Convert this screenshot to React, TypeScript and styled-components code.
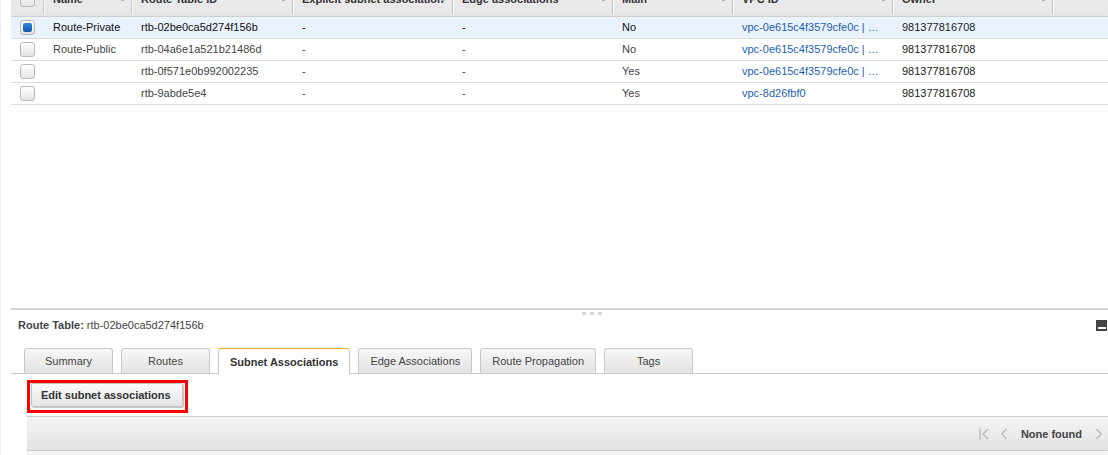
import React from 'react';
import styled, { createGlobalStyle, css } from 'styled-components';

const GlobalStyle = createGlobalStyle`
  html, body { margin: 0; padding: 0; background: #fff; }
  body { font-family: "Liberation Sans", Arial, sans-serif; font-size: 11px; color: #444; }
  * { box-sizing: border-box; }
`;

const COLS = '32px 88px 161px 160px 160px 120px 160px 160px 1fr';

const Page = styled.div`
  display: flex;
  width: 1108px;
  height: 455px;
  overflow: hidden;
  background: #fff;
`;

const Gutter = styled.div`
  width: 11px;
  flex: none;
  border-left: 1px solid #efefef;
`;

const Main = styled.div`
  flex: 1;
  min-width: 0;
  display: flex;
  flex-direction: column;
  & > * {
    flex-shrink: 0;
  }
`;

const TopPane = styled.div`
  height: 308px;
  overflow: hidden;
`;

const Table = styled.div`
  margin-top: -18px;
`;

const HeaderRow = styled.div`
  display: grid;
  grid-template-columns: ${COLS};
  height: 35px;
  background: linear-gradient(#f1f1f1, #e5e5e5);
  border-bottom: 1px solid #cfcfcf;
`;

const HeaderCell = styled.div<{ $first?: boolean }>`
  position: relative;
  display: flex;
  align-items: center;
  padding-left: ${p => (p.$first ? '9px' : '10px')};
  font-weight: bold;
  color: #333;
  white-space: nowrap;
  overflow: hidden;
  ${p =>
    !p.$first &&
    css`
      &::before {
        content: '';
        position: absolute;
        left: 0;
        top: 4px;
        bottom: 2px;
        width: 1px;
        background: #c4c4c4;
        box-shadow: 1px 0 0 #fafafa;
      }
    `}
`;

const SortMark = styled.span`
  position: absolute;
  right: 7px;
  top: 16px;
  width: 3px;
  height: 3px;
  background: #b0b0b0;
`;

const Row = styled.div<{ $selected?: boolean }>`
  display: grid;
  grid-template-columns: ${COLS};
  height: 22px;
  border-bottom: 1px solid #dcdcdc;
  background: ${p => (p.$selected ? '#eaf2fd' : '#fff')};
  color: ${p => (p.$selected ? '#111' : '#444')};
`;

const Cell = styled.div<{ $link?: boolean; $dark?: boolean; $box?: boolean }>`
  display: flex;
  align-items: center;
  padding-left: ${p => (p.$box ? '9px' : '10px')};
  padding-right: 8px;
  padding-bottom: 1px;
  white-space: nowrap;
  overflow: hidden;
  ${p => p.$link && css`color: #1d5fb3;`}
  ${p => p.$dark && css`color: #1a1a1a;`}
`;

const Check = styled.span<{ $checked?: boolean }>`
  position: relative;
  width: 15px;
  height: 15px;
  border: 1px solid #b9b9b9;
  border-radius: 3px;
  background: linear-gradient(#ffffff, #e4e4e4);
  ${p =>
    p.$checked &&
    css`
      &::after {
        content: '';
        position: absolute;
        left: 2px;
        top: 2px;
        width: 9px;
        height: 9px;
        border-radius: 2px;
        background: linear-gradient(#2f83dd, #1559b0);
      }
    `}
`;

const Splitter = styled.div`
  position: relative;
  height: 2px;
  background: #d3d3d3;
`;

const Grip = styled.div`
  position: absolute;
  left: 571px;
  top: 4px;
  display: flex;
  gap: 4px;
`;

const GripDot = styled.span`
  width: 4px;
  height: 3px;
  border: 1px solid #cfcfcf;
  background: #ececec;
`;

const TitleBar = styled.div`
  height: 30px;
  display: flex;
  align-items: center;
  justify-content: space-between;
  padding-left: 7px;
  padding-right: 1px;
  color: #444;
`;

const TitleLabel = styled.span`
  font-weight: bold;
  margin-right: 3px;
`;

const MinButton = styled.span`
  position: relative;
  width: 11px;
  height: 11px;
  background: #444;
  &::after {
    content: '';
    position: absolute;
    left: 2px;
    right: 1px;
    bottom: 2px;
    height: 2px;
    background: #fff;
  }
`;

const TabStrip = styled.div`
  display: flex;
  align-items: flex-end;
  gap: 8px;
  padding: 8px 0 0 13px;
  border-bottom: 1px solid #cbcbcb;
`;

const Tab = styled.div<{ $active?: boolean }>`
  height: 25px;
  min-width: 89px;
  padding: 0 11px;
  display: flex;
  align-items: center;
  justify-content: center;
  border: 1px solid #c8c8c8;
  border-bottom: none;
  border-radius: 3px 3px 0 0;
  background: linear-gradient(#f7f7f7, #e3e3e3);
  color: #444;
  white-space: nowrap;
  ${p =>
    p.$active &&
    css`
      height: 26px;
      margin-bottom: -1px;
      background: #fff;
      border-top: 1px solid #f5a623;
      font-weight: bold;
      color: #333;
    `}
`;

const ActionRow = styled.div`
  display: flex;
  padding: 6px 0 0 16px;
`;

const Highlight = styled.div`
  display: flex;
  border: 3px solid #ff0000;
  padding: 0 2px 3px 1px;
`;

const Button = styled.button`
  height: 24px;
  padding: 0 11px 0 9px;
  border: 1px solid #c4c4c4;
  border-radius: 2px;
  background: linear-gradient(#fbfbfb, #e4e4e4);
  box-shadow: 1px 1px 0 #c9c9c9;
  font-family: "Liberation Sans", Arial, sans-serif;
  font-size: 11px;
  font-weight: bold;
  color: #333;
  cursor: pointer;
`;

const GridArea = styled.div`
  margin: 3px 0 0 16px;
  display: flex;
  flex-direction: column;
`;

const GridBar = styled.div`
  height: 35px;
  display: flex;
  align-items: center;
  justify-content: flex-end;
  padding-right: 6px;
  border-top: 1px solid #cfcfcf;
  border-bottom: 1px solid #cfcfcf;
  background: linear-gradient(#f3f3f3, #e3e3e3);
`;

const GridHead = styled.div`
  height: 24px;
  background: #f4f4f4;
  border-bottom: 1px solid #dcdcdc;
`;

const Pager = styled.div`
  display: flex;
  align-items: center;
`;

const PagerIcon = styled.svg<{ $gap: number }>`
  margin-right: ${p => p.$gap}px;
  color: #b4b4b4;
`;

const PagerText = styled.span`
  font-weight: bold;
  color: #444;
  margin-right: 14px;
`;

type Rt = { name: string; id: string; main: string; vpc: string; selected?: boolean };

const rows: Rt[] = [
  { name: 'Route-Private', id: 'rtb-02be0ca5d274f156b', main: 'No', vpc: 'vpc-0e615c4f3579cfe0c | …', selected: true },
  { name: 'Route-Public', id: 'rtb-04a6e1a521b21486d', main: 'No', vpc: 'vpc-0e615c4f3579cfe0c | …' },
  { name: '', id: 'rtb-0f571e0b992002235', main: 'Yes', vpc: 'vpc-0e615c4f3579cfe0c | …' },
  { name: '', id: 'rtb-9abde5e4', main: 'Yes', vpc: 'vpc-8d26fbf0' },
];

const headers = ['Name', 'Route Table ID', 'Explicit subnet association', 'Edge associations', 'Main', 'VPC ID', 'Owner'];

const tabs = ['Summary', 'Routes', 'Subnet Associations', 'Edge Associations', 'Route Propagation', 'Tags'];

export default function App() {
  return (
    <>
      <GlobalStyle />
      <Page>
        <Gutter />
        <Main>
          <TopPane>
            <Table>
              <HeaderRow>
                <HeaderCell $first>
                  <Check />
                </HeaderCell>
                {headers.map(h => (
                  <HeaderCell key={h}>
                    {h}
                    <SortMark />
                  </HeaderCell>
                ))}
                <HeaderCell />
              </HeaderRow>
              {rows.map(r => (
                <Row key={r.id} $selected={r.selected}>
                  <Cell $box>
                    <Check $checked={r.selected} />
                  </Cell>
                  <Cell>{r.name}</Cell>
                  <Cell>{r.id}</Cell>
                  <Cell>-</Cell>
                  <Cell>-</Cell>
                  <Cell>{r.main}</Cell>
                  <Cell $link>{r.vpc}</Cell>
                  <Cell $dark>981377816708</Cell>
                  <Cell />
                </Row>
              ))}
            </Table>
          </TopPane>
          <Splitter>
            <Grip>
              <GripDot />
              <GripDot />
              <GripDot />
            </Grip>
          </Splitter>
          <TitleBar>
            <span>
              <TitleLabel>Route Table:</TitleLabel>rtb-02be0ca5d274f156b
            </span>
            <MinButton />
          </TitleBar>
          <TabStrip>
            {tabs.map(t => (
              <Tab key={t} $active={t === 'Subnet Associations'}>
                {t}
              </Tab>
            ))}
          </TabStrip>
          <ActionRow>
            <Highlight>
              <Button>Edit subnet associations</Button>
            </Highlight>
          </ActionRow>
          <GridArea>
            <GridBar>
              <Pager>
                <PagerIcon $gap={12} width="10" height="12" viewBox="0 0 10 12" fill="none" stroke="currentColor" strokeWidth="1.2">
                  <path d="M1 0.5V11.5" />
                  <path d="M9 1L4 6L9 11" />
                </PagerIcon>
                <PagerIcon $gap={14} width="6" height="12" viewBox="0 0 6 12" fill="none" stroke="currentColor" strokeWidth="1.2">
                  <path d="M5.5 1L0.8 6L5.5 11" />
                </PagerIcon>
                <PagerText>None found</PagerText>
                <PagerIcon $gap={0} width="6" height="12" viewBox="0 0 6 12" fill="none" stroke="currentColor" strokeWidth="1.2">
                  <path d="M0.5 1L5.2 6L0.5 11" />
                </PagerIcon>
              </Pager>
            </GridBar>
            <GridHead />
          </GridArea>
        </Main>
      </Page>
    </>
  );
}
